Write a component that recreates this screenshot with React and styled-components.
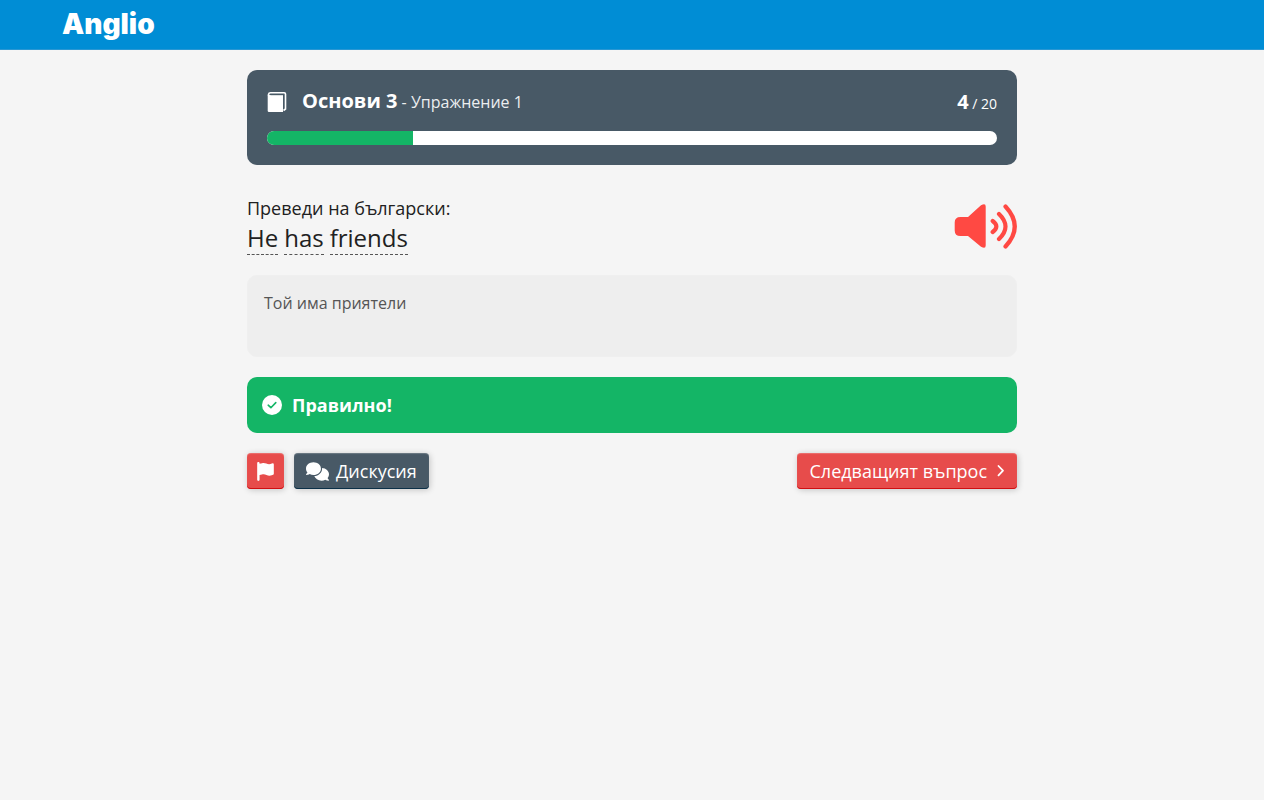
import React from "react";
import styled, { createGlobalStyle } from "styled-components";
import { FaComments, FaFlag } from "react-icons/fa6";

const GlobalStyle = createGlobalStyle`
  *, *::before, *::after { box-sizing: border-box; }
  body {
    margin: 0;
    background: #f5f5f5;
    color: #212121;
    font-family: "Open Sans", "Noto Sans", sans-serif;
    font-size: 16px;
    line-height: 24px;
  }
`;

const Header = styled.header`
  background: #008dd5;
  border-bottom: 1px solid #2a97d3;
`;

const HeaderInner = styled.div`
  display: flex;
  max-width: 1140px;
  height: 49px;
  margin: 0 auto;
  padding-bottom: 2px;
  align-items: center;
`;

const Logo = styled.a`
  color: #fff;
  font-family: Inter, "Open Sans", sans-serif;
  font-size: 28px;
  font-weight: 900;
  line-height: 40px;
  text-decoration: none;
`;

const Main = styled.main`
  display: flex;
  flex-direction: column;
  gap: 20px;
  max-width: 770px;
  margin: 20px auto;
`;

const ProgressCard = styled.section`
  padding: 16px 20px 20px;
  border-radius: 10px;
  background: #485966;
  color: #fff;
`;

const CardHead = styled.div`
  display: flex;
  justify-content: space-between;
  align-items: flex-start;
  height: 32px;
  margin-bottom: 13px;
`;

const Lesson = styled.div`
  display: flex;
  align-items: center;
  gap: 15px;
`;

const LessonTitle = styled.h1`
  margin: 0;
  font-size: 16px;
  font-weight: 400;
  line-height: 30px;
  color: #eceef0;
`;

const Strong = styled.strong`
  font-size: 20px;
  font-weight: 700;
  color: #fff;
`;

const Count = styled.div`
  font-size: 14px;
  line-height: 32px;
`;

const Bar = styled.div`
  height: 14px;
  border-radius: 7px;
  background: #fff;
  overflow: hidden;
`;

const BarFill = styled.div`
  height: 100%;
  background: #14b566;
`;

const Question = styled.section`
  display: flex;
  justify-content: space-between;
  align-items: center;
  padding-top: 10px;
`;

const Prompt = styled.label`
  display: block;
  font-size: 18px;
  line-height: 26px;
`;

const Sentence = styled.p`
  display: flex;
  gap: 6px;
  margin: 0;
  font-size: 24px;
  line-height: 33px;
`;

const Word = styled.span`
  border-bottom: 1px dashed #555;
`;

const Speaker = styled.button`
  display: flex;
  padding: 2px 0 0;
  border: 0;
  background: none;
  color: #ff4943;
  cursor: pointer;
`;

const Answer = styled.textarea`
  display: block;
  width: 100%;
  height: 82px;
  padding: 15px 16px;
  border: 1px solid #efefef;
  border-radius: 10px;
  background: #eee;
  color: #555;
  font: inherit;
  resize: none;
`;

const Result = styled.div`
  display: flex;
  align-items: center;
  gap: 10px;
  height: 56px;
  padding: 0 15px 1px;
  border-radius: 10px;
  background: #14b566;
  color: #fff;
  font-size: 18px;
  font-weight: 700;
`;

const Actions = styled.div`
  display: flex;
  gap: 10px;
`;

const Button = styled.button`
  display: flex;
  align-items: center;
  justify-content: center;
  gap: ${(p) => (p.$end ? "9px" : "7px")};
  height: 36px;
  padding: 0 ${(p) => (p.$end ? "12px 0 13px" : p.$icon ? "9px" : "12px")};
  margin-left: ${(p) => (p.$end ? "auto" : "0")};
  border: 0;
  border-radius: 4px;
  background: ${(p) => (p.$dark ? "#485966" : "#e74c4b")};
  box-shadow: inset 0 -1px 0 ${(p) => (p.$dark ? "#0b3048" : "#d00f12")},
    inset 0 1px 1px rgba(255, 255, 255, 0.2), 1px 1px 6px rgba(0, 0, 0, 0.2);
  color: #fff;
  font: inherit;
  font-size: 18px;
  cursor: pointer;
`;

const BookIcon = () => (
  <svg width="20" height="22" viewBox="0 0 20 22" aria-hidden="true">
    <path d="M1 4H16V21H2Q.7 21 .7 19.700V4Z" fill="#fff" />
    <path
      d="M1.500 4.500V3.500Q1.800 1.800 3.500 1.800H17.200Q18.500 1.800 18.500 3V18L16.500 19.500"
      fill="none"
      stroke="#fff"
      strokeWidth="1.600"
    />
    <path d="M3.500 3.700H16.500V18" fill="none" stroke="#485966" strokeWidth="1" />
  </svg>
);

const SpeakerIcon = () => (
  <svg width="63" height="46" viewBox="0 0 63 46" aria-hidden="true">
    <path
      d="M6.500 14H14L27 2.300Q31.700-.5 31.700 3.500V42.500Q31.700 46.500 27 43.700L14 33H6.500Q.7 33 .7 27.500V19.500Q.7 14 6.500 14Z"
      fill="currentColor"
    />
    <path
      d="M38.700 18Q46 23.500 38.700 29M45 11Q58 23.500 45 36M51.500 3.500Q70 23.500 51.500 43.500"
      fill="none"
      stroke="currentColor"
      strokeWidth="4.200"
      strokeLinecap="round"
    />
  </svg>
);

const CheckIcon = () => (
  <svg width="20" height="20" viewBox="0 0 20 20" aria-hidden="true">
    <circle cx="10" cy="10" r="10" fill="#fff" />
    <path d="M6.200 10.200L8.900 12.700L13.800 7.600" fill="none" stroke="#14b566" strokeWidth="1.600" strokeLinecap="round" strokeLinejoin="round" />
  </svg>
);

const ChevronIcon = () => (
  <svg width="9" height="14" viewBox="0 0 9 14" aria-hidden="true">
    <path d="M2.500 2L7 6.700L2.500 11.400" fill="none" stroke="#fff" strokeWidth="1.800" strokeLinecap="round" strokeLinejoin="round" />
  </svg>
);

const current = 4;
const total = 20;
const words = ["He", "has", "friends"];

export default function App() {
  return (
    <>
      <GlobalStyle />
      <Header>
        <HeaderInner>
          <Logo href="#">Anglio</Logo>
        </HeaderInner>
      </Header>
      <Main>
        <ProgressCard>
          <CardHead>
            <Lesson>
              <BookIcon />
              <LessonTitle>
                <Strong>Основи 3</Strong> - Упражнение 1
              </LessonTitle>
            </Lesson>
            <Count>
              <Strong>{current}</Strong> / {total}
            </Count>
          </CardHead>
          <Bar role="progressbar" aria-label="Упражнение 1" aria-valuenow={current} aria-valuemin={0} aria-valuemax={total}>
            <BarFill style={{ width: `${(current / total) * 100}%` }} />
          </Bar>
        </ProgressCard>
        <Question>
          <div>
            <Prompt htmlFor="answer">Преведи на български:</Prompt>
            <Sentence lang="en">
              {words.map((word) => (
                <Word key={word}>{word}</Word>
              ))}
            </Sentence>
          </div>
          <Speaker type="button" aria-label="Чуй изречението">
            <SpeakerIcon />
          </Speaker>
        </Question>
        <Answer id="answer" readOnly defaultValue="Той има приятели" />
        <Result role="status">
          <CheckIcon />
          Правилно!
        </Result>
        <Actions>
          <Button type="button" $icon aria-label="Докладвай">
            <FaFlag size={19} />
          </Button>
          <Button type="button" $dark>
            <FaComments size={23} />
            Дискусия
          </Button>
          <Button type="button" $end>
            Следващият въпрос
            <ChevronIcon />
          </Button>
        </Actions>
      </Main>
    </>
  );
}
